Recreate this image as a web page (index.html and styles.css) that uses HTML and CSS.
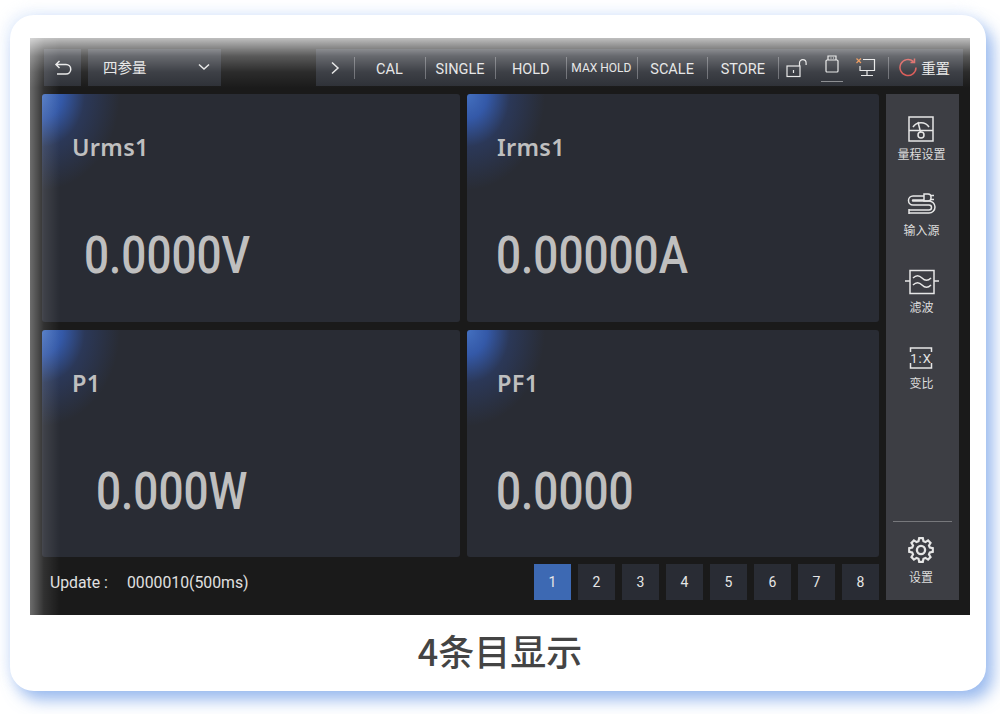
FILE: index.html
```html
<!DOCTYPE html>
<html lang="zh-CN">
<head>
<meta charset="utf-8">
<title>4条目显示</title>
<link rel="stylesheet" href="styles.css">
</head>
<body>
<div class="card">
  <div class="screen">
    <header class="toolbar">
      <button class="tool back"><svg width="18" height="16" viewBox="0 0 18 16" class="ic"><path d="M5.500 1 2 4.500 5.500 8M2 4.500h10a4.500 4.500 0 0 1 0 9.500H3"/></svg></button>
      <div class="tool select"><span>四参量</span><svg width="12" height="8" viewBox="0 0 12 8" class="ic"><path d="M1 1.500 6 6l5-4.500"/></svg></div>
      <div class="tool actions">
        <div class="cell arrow"><svg width="10" height="14" viewBox="0 0 10 14" class="ic"><path d="M2 1.500 8 7l-6 5.500"/></svg></div>
        <div class="cell txt">CAL</div>
        <div class="cell txt">SINGLE</div>
        <div class="cell txt">HOLD</div>
        <div class="cell txt small">MAX HOLD</div>
        <div class="cell txt">SCALE</div>
        <div class="cell txt">STORE</div>
        <div class="icons">
          <svg width="21" height="20" viewBox="0 0 21 20" class="ic thin"><rect x="1" y="8" width="13" height="10.500"/><path d="M7.500 12v3M13.500 8V5a3.300 3.300 0 0 1 6.600 0v2"/></svg>
          <div class="usb"><svg width="14" height="18" viewBox="0 0 14 18" class="ic thin"><rect x="1" y="5" width="12" height="12" rx="1"/><path d="M3 5V1h8v4M5.500 3h1M8 3h1"/></svg></div>
          <svg width="20" height="19" viewBox="0 0 20 19" class="ic thin"><path d="M7 1.500h11.500v11H4V8M11 12.500v5M5 17.500h12"/><path class="x" d="M0.500 0.500 5 5M5 0.500 0.500 5"/></svg>
        </div>
        <div class="reset"><svg width="19" height="19" viewBox="0 0 19 19" class="ic red"><path d="M17 9.500a8 8 0 1 1-2.600-5.900M15.500 0.500v4h-4"/></svg><span>重置</span></div>
      </div>
    </header>
    <div class="main">
      <div class="left">
        <section class="grid">
          <article class="panel"><h2>Urms1</h2><p class="value v1">0.0000V</p></article>
          <article class="panel"><h2>Irms1</h2><p class="value v2">0.00000A</p></article>
          <article class="panel"><h2>P1</h2><p class="value v3">0.000W</p></article>
          <article class="panel"><h2>PF1</h2><p class="value v2">0.0000</p></article>
        </section>
        <footer class="status">
          <div class="update"><span>Update :</span><span>0000010(500ms)</span></div>
          <nav class="pager">
            <span class="pg on">1</span><span class="pg">2</span><span class="pg">3</span><span class="pg">4</span><span class="pg">5</span><span class="pg">6</span><span class="pg">7</span><span class="pg">8</span>
          </nav>
        </footer>
      </div>
      <aside class="side">
        <div class="side-item"><svg width="26" height="26" viewBox="0 0 26 26" class="ic"><rect x="1" y="1" width="24" height="24"/><path d="M1 14.500h24M5 11a9 8 0 0 1 16 0M13 18 10 6"/><circle cx="13" cy="19" r="3" fill="#3d3e44"/></svg><span>量程设置</span></div>
        <div class="side-item"><svg width="30" height="26" viewBox="0 0 30 26" class="ic"><path d="M18 4H7a4.500 4.500 0 0 0 0 9h16a2.500 2.500 0 0 1 0 5H3M18 8H7a.5.5 0 0 0 0 1h16a6 6 0 0 1 0 12H3M3 17v5"/><path d="M18 2h4a3 3 0 0 1 3 3v1a3 3 0 0 1-3 3h-4zM25 3.500h3M25 7.500h3"/></svg><span>输入源</span></div>
        <div class="side-item"><svg width="34" height="26" viewBox="0 0 34 26" class="ic"><rect x="5" y="1.500" width="24" height="23"/><path d="M0 12h5M29 12h5M8 9c3-3 6-3 9 0s6 3 9 0M8 16c3-3 6-3 9 0s6 3 9 0"/></svg><span>滤波</span></div>
        <div class="side-item"><svg width="24" height="26" viewBox="0 0 24 26" class="ic ratio"><path d="M1.500 7V3h21v4M1.500 18v5h21v-5"/><text x="12" y="17.500">1:X</text></svg><span>变比</span></div>
        <div class="side-foot"><svg width="28" height="28" viewBox="0 0 24 24" class="ic gear"><circle cx="12" cy="12" r="3.500"/><path d="M10.300 2h3.400l.6 2.800 1.900.8 2.400-1.500 2.300 2.300-1.500 2.400.8 1.900 2.800.6v3.400l-2.800.6-.8 1.900 1.500 2.400-2.300 2.300-2.400-1.500-1.900.8-.6 2.800h-3.400l-.6-2.800-1.900-.8-2.400 1.500-2.300-2.300 1.500-2.400-.8-1.900-2.800-.6v-3.400l2.800-.6.8-1.900-1.500-2.400 2.300-2.300 2.400 1.500 1.900-.8z" transform="translate(12 12) scale(.92) translate(-12 -13)"/></svg><span>设置</span></div>
      </aside>
    </div>
  </div>
  <h1 class="caption">4条目显示</h1>
</div>
</body>
</html>
```
FILE: styles.css
```css
* { box-sizing: border-box; margin: 0; padding: 0; }
html, body { width: 1000px; height: 714px; overflow: hidden; background: #fff; }
body { padding: 15px 14px 23px 10px; font-family: Roboto, "Noto Sans CJK SC", sans-serif; }

.card {
  width: 976px; height: 676px; padding: 23px 20px 0 20px;
  background: #fff; border-radius: 24px;
  box-shadow: 7px 9px 16px rgba(115, 160, 232, .72), -4px -4px 14px rgba(170, 200, 245, .24);
}
.screen { position: relative; width: 940px; height: 577px; padding: 11px 11px 15px 12px; background: #1a1a1a; display: flex; flex-direction: column; gap: 8px; overflow: hidden; }
.screen::after {
  content: ""; position: absolute; inset: 0; pointer-events: none;
  background:
    linear-gradient(to bottom, rgba(255,255,255,.72), rgba(255,255,255,.28) 18px, rgba(255,255,255,.08) 34px, rgba(255,255,255,0) 50px),
    linear-gradient(to right, rgba(255,255,255,.36), rgba(255,255,255,.1) 14px, rgba(255,255,255,0) 30px);
}

.ic { fill: none; stroke: #e6e6e6; stroke-width: 1.500; display: block; }
.ic.thin { stroke-width: 1.200; }
.ic.red { stroke: #d9534f; stroke-width: 1.500; }
.ic .x { stroke: #e8843a; }
.gear { stroke-width: 2; }
.ratio text { font: 13px Roboto, sans-serif; fill: #e6e6e6; stroke: none; text-anchor: middle; letter-spacing: 1px; }

.toolbar { display: flex; height: 37px; flex: none; margin-left: 2px; margin-right: -4px; color: #e4e4e4; }
.tool { background: #2d3037; border: 0; height: 37px; display: flex; align-items: center; }
.back { width: 37px; justify-content: center; margin-right: 7px; }
.select { width: 133px; padding: 0 11px 2px 15px; justify-content: space-between; font: 14.500px "Noto Sans CJK SC", sans-serif; }
.actions { margin-left: 95px; width: 647px; }
.cell { height: 22px; display: flex; align-items: center; justify-content: center; border-right: 1px solid #6a6c72; }
.arrow { width: 39px; }
.txt { width: 70.700px; font-size: 14.500px; padding: 3px 1px 0 0; }
.small { font-size: 12px; padding: 0 1px 0 0; }
.icons { width: 110px; height: 22px; display: flex; align-items: center; justify-content: space-between; padding: 0 12px 0 7px; border-right: 1px solid #6a6c72; }
.usb { width: 22px; border-bottom: 1px solid #8a8c90; height: 27px; margin-top: 1px; display: flex; justify-content: center; }
.reset { display: flex; align-items: center; gap: 3px; padding-left: 10px; font: 14.500px "Noto Sans CJK SC", sans-serif; }

.main { flex: 1; display: flex; gap: 7px; min-height: 0; }
.left { width: 837px; display: flex; flex-direction: column; gap: 7px; }
.grid { display: grid; grid-template-columns: 418px 412px; grid-template-rows: 228px 227px; gap: 8px 7px; }
.panel {
  border-radius: 3px; padding: 40px 0 0 30px;
  background: radial-gradient(ellipse 78px 96px at 0 0, #4470c0 0, #3459a8 26%, rgba(44,60,100,.75) 55%, rgba(41,44,52,0) 100%), #292c34;
  color: #bfbfbf;
}
.panel h2 { font: 600 23.500px/26px "Noto Sans", sans-serif; letter-spacing: .3px; }
.value { margin-top: 60px; margin-left: -1px; width: max-content; font: 500 51px/72px Roboto, sans-serif; transform: scaleX(.865); transform-origin: 0 50%; }
.v1 { margin-left: 12px; }
.v3 { margin-left: 24px; }

.status { height: 36px; display: flex; justify-content: space-between; align-items: center; padding-left: 8px; }
.update { display: flex; gap: 19px; font-size: 15.800px; color: #e0e0e0; }
.pager { display: flex; gap: 7px; }
.pg { width: 37px; height: 36px; background: #292c34; color: #e6e6e6; font-size: 14px; display: flex; align-items: center; justify-content: center; }
.pg.on { background: #3d69b3; }

.side { width: 73px; background: #3d3e44; display: flex; flex-direction: column; align-items: center; padding: 22px 2px 0 0; color: #dcdcdc; font: 12px "Noto Sans CJK SC", sans-serif; }
.side-item { height: 76.300px; flex: none; display: flex; flex-direction: column; align-items: center; gap: 4px; }
.side-item span { line-height: 16px; }
.side-foot { margin-top: auto; width: 59px; height: 79px; margin-right: -2px; border-top: 1px solid #77787c; display: flex; flex-direction: column; align-items: center; padding: 14px 3px 0 0; gap: 4px; }

.caption { margin-top: 13px; padding-left: 4px; text-align: center; font: 500 36px/44px "Noto Sans CJK SC", sans-serif; color: #444; }
```
